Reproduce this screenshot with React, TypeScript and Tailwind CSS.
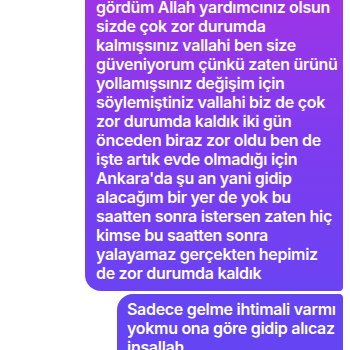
const firstLines = [
  'gördüm Allah yardımcınız olsun',
  'sizde çok zor durumda',
  'kalmışsınız vallahi ben size',
  'güveniyorum çünkü zaten ürünü',
  'yollamışsınız değişim için',
  'söylemiştiniz vallahi biz de çok',
  'zor durumda kaldık iki gün',
  'önceden biraz zor oldu ben de',
  'işte artık evde olmadığı için',
  "Ankara'da şu an yani gidip",
  'alacağım bir yer de yok bu',
  'saatten sonra istersen zaten hiç',
  'kimse bu saatten sonra',
  'yalayamaz gerçekten hepimiz',
  'de zor durumda kaldık',
];

const secondLines = [
  'Sadece gelme ihtimali varmı',
  'yokmu ona göre gidip alıcaz',
  'inşallah',
];

export default function App() {
  return (
    <div className="w-[350px] h-[350px] overflow-hidden bg-white font-['Inter',sans-serif]">
      <div className="flex flex-col items-end gap-[3px] pr-[7px] -mt-[10px]">
        <div className="w-[258px] rounded-[4px] rounded-bl-[16px] bg-gradient-to-b from-[#a032e6] via-[#7e3bef] to-[#6a43f3] pl-[11px] pr-[6px] pt-[8px] pb-[8px] text-white text-[16px] font-semibold leading-[19px] tracking-[-0.3px]">
          {firstLines.map((line, i) => (
            <div key={i} className="whitespace-nowrap">{line}</div>
          ))}
        </div>
        <div className="w-[226px] rounded-[4px] rounded-tl-[16px] bg-[#6544f4] pl-[10px] pr-[6px] pt-[6px] pb-[8px] text-white text-[16px] font-semibold leading-[19px] tracking-[-0.3px]">
          {secondLines.map((line, i) => (
            <div key={i} className="whitespace-nowrap">{line}</div>
          ))}
        </div>
      </div>
    </div>
  );
}
